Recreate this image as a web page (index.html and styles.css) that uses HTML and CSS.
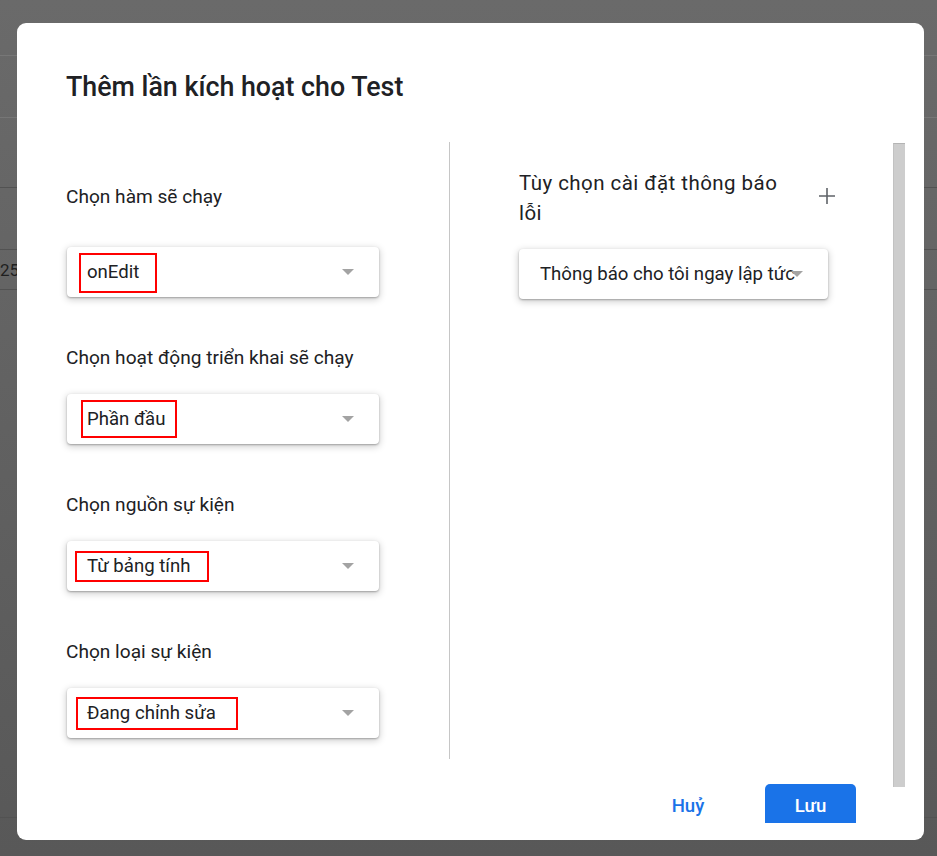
FILE: index.html
```html
<!DOCTYPE html>
<html lang="vi">
<head>
<meta charset="utf-8">
<title>Thêm lần kích hoạt cho Test</title>
<link rel="stylesheet" href="styles.css">
</head>
<body>
<div class="backdrop">
  <div class="bg-row r1"></div>
  <div class="bg-row r2"></div>
  <div class="bg-row r3"></div>
  <div class="bg-row r4"></div>
  <div class="bg-row r5"><span class="cell-num">25</span></div>
  <div class="bg-row r6"></div>
  <div class="bg-row r7"></div>
</div>

<div class="dialog">
  <h1 class="title">Thêm lần kích hoạt cho Test</h1>
  <div class="scroll">
    <div class="content">
      <div class="columns">
        <div class="col-left">
          <div class="field first">
            <div class="label">Chọn hàm sẽ chạy</div>
            <div class="select select-left">
              <span class="value">onEdit</span>
              <span class="arrow"></span>
              <span class="mark m1"></span>
            </div>
          </div>
          <div class="field">
            <div class="label">Chọn hoạt động triển khai sẽ chạy</div>
            <div class="select select-left">
              <span class="value">Phần đầu</span>
              <span class="arrow"></span>
              <span class="mark m2"></span>
            </div>
          </div>
          <div class="field">
            <div class="label">Chọn nguồn sự kiện</div>
            <div class="select select-left">
              <span class="value">Từ bảng tính</span>
              <span class="arrow"></span>
              <span class="mark m3"></span>
            </div>
          </div>
          <div class="field">
            <div class="label">Chọn loại sự kiện</div>
            <div class="select select-left">
              <span class="value">Đang chỉnh sửa</span>
              <span class="arrow"></span>
              <span class="mark m4"></span>
            </div>
          </div>
        </div>
        <div class="divider"></div>
        <div class="col-right">
          <div class="notify-head">
            <div class="notify-label">Tùy chọn cài đặt thông báo lỗi</div>
            <svg class="plus" width="18" height="18" viewBox="0 0 18 18" aria-hidden="true">
              <path d="M9 1v16M1 9h16" stroke="#5f6368" stroke-width="1.6" fill="none"/>
            </svg>
          </div>
          <div class="select select-right">
            <span class="value value-clip">Thông báo cho tôi ngay lập tức</span>
            <span class="arrow"></span>
          </div>
        </div>
      </div>
      <div class="footer">
        <button class="btn btn-text">Huỷ</button>
        <button class="btn btn-primary">Lưu</button>
      </div>
    </div>
    <div class="scrollbar"><div class="thumb"></div></div>
  </div>
</div>
</body>
</html>
```

FILE: styles.css
```css
html, body {
  margin: 0;
  padding: 0;
}

body {
  width: 937px;
  height: 856px;
  overflow: hidden;
  position: relative;
  background: linear-gradient(#6a6a6a, #585858);
  font-family: Roboto, "Liberation Sans", Arial, sans-serif;
  color: #202124;
}

/* dimmed spreadsheet behind the dialog */
.backdrop {
  display: flex;
  flex-direction: column;
  width: 937px;
  height: 856px;
}

.bg-row {
  flex: none;
  border-bottom: 1px solid #525252;
  display: flex;
  align-items: center;
}

.r1 { height: 55px; border-bottom-color: #777777; }
.r2 { height: 61px; border-bottom-color: #767676; }
.r3 { height: 69px; }
.r4 { height: 61px; }
.r5 { height: 39px; }
.r6 { height: 527px; }
.r7 { height: 30px; border-bottom: none; }

.cell-num {
  font-size: 17px;
  color: #1f1f1f;
  margin-left: 0;
}

/* dialog */
.dialog {
  position: absolute;
  left: 17px;
  top: 23px;
  width: 907px;
  height: 817px;
  background: #ffffff;
  border-radius: 9px;
  display: flex;
  flex-direction: column;
  overflow: hidden;
}

.title {
  margin: 0 0 41px 0;
  padding: 50px 0 0 49px;
  font-size: 26.8px;
  line-height: 28px;
  font-weight: 500;
  color: #202124;
  letter-spacing: 0;
}

.scroll {
  display: flex;
  height: 681px;
  overflow: hidden;
  flex: none;
}

.content {
  width: 876px;
  flex: none;
  display: flex;
  flex-direction: column;
}

.columns {
  display: flex;
  height: 617px;
  flex: none;
}

.col-left {
  width: 383px;
  padding-left: 49px;
  flex: none;
}

.divider {
  width: 1px;
  background: #c6c6c6;
  flex: none;
}

.col-right {
  padding-left: 69px;
  flex: 1;
}

.field {
  display: flex;
  flex-direction: column;
}

.field + .field {
  margin-top: 49px;
}

.field.first {
  margin-top: 43px;
}

.label {
  font-size: 19.1px;
  line-height: 24px;
  color: #202124;
  margin-bottom: 24px;
}

.field.first .label {
  margin-bottom: 38px;
}

.select {
  position: relative;
  height: 50px;
  background: #ffffff;
  border-radius: 4px;
  box-shadow: 0 1px 2px rgba(0, 0, 0, 0.28), 0 2px 7px 1px rgba(0, 0, 0, 0.18);
  display: flex;
  align-items: center;
  box-sizing: border-box;
  padding-left: 20px;
}

.select-left {
  width: 312px;
  margin-left: 1px;
}

.value {
  font-size: 18.6px;
  line-height: 24px;
  color: #202124;
  white-space: nowrap;
}

.arrow {
  position: absolute;
  right: 25px;
  top: 22px;
  width: 0;
  height: 0;
  border-left: 6.5px solid transparent;
  border-right: 6.5px solid transparent;
  border-top: 6px solid #a3a3a3;
}

/* red annotation boxes over the selected values */
.mark {
  position: absolute;
  border: 2px solid #ff0000;
  box-sizing: border-box;
}

.m1 { left: 12px; top: 6px;  width: 78px;  height: 40px; }
.m2 { left: 14px; top: 6px;  width: 96px;  height: 38px; }
.m3 { left: 8px;  top: 10px; width: 134px; height: 31px; }
.m4 { left: 9px;  top: 9px;  width: 162px; height: 33px; }

/* right column */
.notify-head {
  margin-top: 26px;
  width: 317px;
  display: flex;
  align-items: center;
  justify-content: space-between;
}

.notify-label {
  width: 268px;
  font-size: 20.5px;
  letter-spacing: 0.45px;
  line-height: 30px;
  color: #202124;
}

.plus {
  margin-top: -4px;
  flex: none;
}

.select-right {
  width: 309px;
  margin-top: 21px;
  padding-left: 21px;
}

.value-clip {
  display: block;
  width: 257px;
  overflow: hidden;
}

/* footer */
.footer {
  display: flex;
  justify-content: flex-end;
  align-items: flex-start;
  gap: 32px;
  margin-top: 25px;
  padding-right: 37px;
  flex: none;
}

.btn {
  font-family: Roboto, "Liberation Sans", Arial, sans-serif;
  font-size: 18.6px;
  font-weight: 500;
  height: 44px;
  border: none;
  border-radius: 5px;
  padding: 0;
  cursor: pointer;
}

.btn-text {
  width: 90px;
  background: transparent;
  color: #1a73e8;
}

.btn-primary {
  width: 91px;
  background: #1a73e8;
  color: #ffffff;
}

/* scrollbar */
.scrollbar {
  width: 12px;
  flex: none;
  padding-top: 1px;
}

.thumb {
  height: 644px;
  background: #cdcdcd;
  border-top: 1px solid #b4b4b4;
  border-left: 1px solid #c2c2c2;
  box-sizing: border-box;
}
```
